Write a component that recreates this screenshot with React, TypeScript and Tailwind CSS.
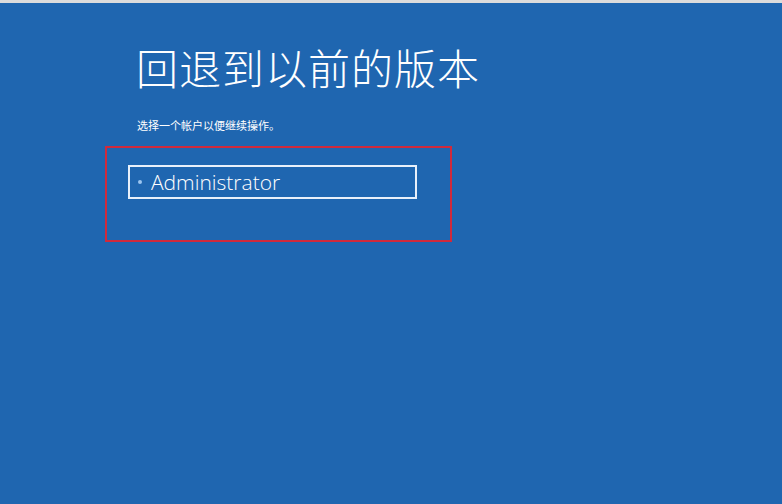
import React from "react";

export default function App() {
  return (
    <div className="w-[782px] h-[504px] flex flex-col overflow-hidden" style={{ fontFamily: '"Noto Sans", "Noto Sans CJK SC", sans-serif' }}>
      <div className="h-[3px] bg-[#dcdcdc]" />
      <div className="flex-1 bg-[#1f66b0] pl-[105px] pt-[39px]">
        <h1 className="ml-[31px] text-[42px] leading-[50px] font-light text-white tracking-[1px]" style={{ fontFamily: '"Noto Sans CJK SC", sans-serif' }}>
          回退到以前的版本
        </h1>
        <p className="ml-[32px] mt-[26px] text-[11px] leading-[14px] text-white" style={{ fontFamily: '"Noto Sans CJK SC", sans-serif' }}>
          选择一个帐户以便继续操作。
        </p>
        <div className="mt-[14px] w-[347px] h-[96px] border-2 border-[#d02a3c] pl-[21px] pt-[17px]">
          <div className="w-[289px] h-[34px] border-2 border-[#e8f0fa] flex items-center pl-[8px]">
            <span className="w-[4px] h-[4px] rounded-full bg-[#9cc6f0]" />
            <span className="ml-[9px] text-[21px] leading-[24px] font-light text-white" style={{ fontFamily: '"Open Sans", "Noto Sans", sans-serif' }}>
              Administrator
            </span>
          </div>
        </div>
      </div>
    </div>
  );
}
